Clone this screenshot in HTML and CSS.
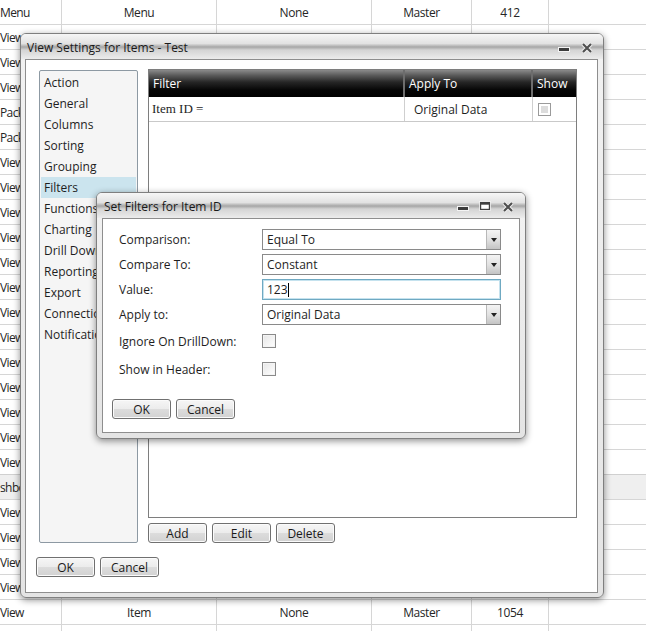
FILE: index.html
```html
<!DOCTYPE html>
<html>
<head>
<meta charset="utf-8">
<link rel="stylesheet" href="styles.css">
</head>
<body>
<div class="sheet">
  <div class="srow"><div class="c c1">Menu</div><div class="c c2">Menu</div><div class="c c3">None</div><div class="c c4">Master</div><div class="c c5">412</div><div class="c c6"></div></div>
  <div class="srow"><div class="c c1">View</div><div class="c c2"></div><div class="c c3"></div><div class="c c4"></div><div class="c c5"></div><div class="c c6"></div></div>
  <div class="srow"><div class="c c1">View</div><div class="c c2"></div><div class="c c3"></div><div class="c c4"></div><div class="c c5"></div><div class="c c6"></div></div>
  <div class="srow"><div class="c c1">View</div><div class="c c2"></div><div class="c c3"></div><div class="c c4"></div><div class="c c5"></div><div class="c c6"></div></div>
  <div class="srow"><div class="c c1">Pack</div><div class="c c2"></div><div class="c c3"></div><div class="c c4"></div><div class="c c5"></div><div class="c c6"></div></div>
  <div class="srow"><div class="c c1">Pack</div><div class="c c2"></div><div class="c c3"></div><div class="c c4"></div><div class="c c5"></div><div class="c c6"></div></div>
  <div class="srow"><div class="c c1">View</div><div class="c c2"></div><div class="c c3"></div><div class="c c4"></div><div class="c c5"></div><div class="c c6"></div></div>
  <div class="srow"><div class="c c1">View</div><div class="c c2"></div><div class="c c3"></div><div class="c c4"></div><div class="c c5"></div><div class="c c6"></div></div>
  <div class="srow"><div class="c c1">View</div><div class="c c2"></div><div class="c c3"></div><div class="c c4"></div><div class="c c5"></div><div class="c c6"></div></div>
  <div class="srow"><div class="c c1">View</div><div class="c c2"></div><div class="c c3"></div><div class="c c4"></div><div class="c c5"></div><div class="c c6"></div></div>
  <div class="srow"><div class="c c1">View</div><div class="c c2"></div><div class="c c3"></div><div class="c c4"></div><div class="c c5"></div><div class="c c6"></div></div>
  <div class="srow"><div class="c c1">View</div><div class="c c2"></div><div class="c c3"></div><div class="c c4"></div><div class="c c5"></div><div class="c c6"></div></div>
  <div class="srow"><div class="c c1">View</div><div class="c c2"></div><div class="c c3"></div><div class="c c4"></div><div class="c c5"></div><div class="c c6"></div></div>
  <div class="srow"><div class="c c1">View</div><div class="c c2"></div><div class="c c3"></div><div class="c c4"></div><div class="c c5"></div><div class="c c6"></div></div>
  <div class="srow"><div class="c c1">View</div><div class="c c2"></div><div class="c c3"></div><div class="c c4"></div><div class="c c5"></div><div class="c c6"></div></div>
  <div class="srow"><div class="c c1">View</div><div class="c c2"></div><div class="c c3"></div><div class="c c4"></div><div class="c c5"></div><div class="c c6"></div></div>
  <div class="srow"><div class="c c1">View</div><div class="c c2"></div><div class="c c3"></div><div class="c c4"></div><div class="c c5"></div><div class="c c6"></div></div>
  <div class="srow"><div class="c c1">View</div><div class="c c2"></div><div class="c c3"></div><div class="c c4"></div><div class="c c5"></div><div class="c c6"></div></div>
  <div class="srow"><div class="c c1">View</div><div class="c c2"></div><div class="c c3"></div><div class="c c4"></div><div class="c c5"></div><div class="c c6"></div></div>
  <div class="srow sel"><div class="c c1">shboard</div><div class="c c2"></div><div class="c c3"></div><div class="c c4"></div><div class="c c5"></div><div class="c c6"></div></div>
  <div class="srow"><div class="c c1">View</div><div class="c c2"></div><div class="c c3"></div><div class="c c4"></div><div class="c c5"></div><div class="c c6"></div></div>
  <div class="srow"><div class="c c1">View</div><div class="c c2"></div><div class="c c3"></div><div class="c c4"></div><div class="c c5"></div><div class="c c6"></div></div>
  <div class="srow"><div class="c c1">View</div><div class="c c2"></div><div class="c c3"></div><div class="c c4"></div><div class="c c5"></div><div class="c c6"></div></div>
  <div class="srow"><div class="c c1">View</div><div class="c c2"></div><div class="c c3"></div><div class="c c4"></div><div class="c c5"></div><div class="c c6"></div></div>
  <div class="srow"><div class="c c1">View</div><div class="c c2">Item</div><div class="c c3">None</div><div class="c c4">Master</div><div class="c c5">1054</div><div class="c c6"></div></div>
  <div class="srow"><div class="c c1"></div><div class="c c2"></div><div class="c c3"></div><div class="c c4"></div><div class="c c5"></div><div class="c c6"></div></div>
</div>

<div class="win win-main">
  <div class="titlebar">
    <span class="title">View Settings for Items - Test</span>
    <span class="ctrls">
      <svg class="ic-min" width="12" height="5" viewBox="0 0 12 5"><rect x="0.5" y="0.5" width="11" height="4" fill="#3c3c3c" stroke="#f4f4f4" stroke-width="1"/></svg>
      <svg class="ic-x" width="12" height="12" viewBox="0 0 12 12"><path d="M2 2 L10 10 M10 2 L2 10" stroke="#f4f4f4" stroke-width="4"/><path d="M2 2 L10 10 M10 2 L2 10" stroke="#505050" stroke-width="2.2"/></svg>
    </span>
  </div>
  <div class="client main-client">
    <div class="main-top">
      <div class="nav">
        <div class="nav-item">Action</div>
        <div class="nav-item">General</div>
        <div class="nav-item">Columns</div>
        <div class="nav-item">Sorting</div>
        <div class="nav-item">Grouping</div>
        <div class="nav-item active">Filters</div>
        <div class="nav-item">Functions</div>
        <div class="nav-item">Charting</div>
        <div class="nav-item">Drill Downs</div>
        <div class="nav-item">Reporting</div>
        <div class="nav-item">Export</div>
        <div class="nav-item">Connections</div>
        <div class="nav-item">Notifications</div>
      </div>
      <div class="right">
        <div class="grid">
          <div class="ghead">
            <div class="gh gc1">Filter</div>
            <div class="gh gc2">Apply To</div>
            <div class="gh gc3">Show</div>
          </div>
          <div class="grow">
            <div class="gd gc1 serif">Item ID =</div>
            <div class="gd gc2">Original Data</div>
            <div class="gd gc3"><span class="gchk"></span></div>
          </div>
        </div>
        <div class="btnrow">
          <div class="btn">Add</div>
          <div class="btn">Edit</div>
          <div class="btn">Delete</div>
        </div>
      </div>
    </div>
    <div class="btnrow bottom-btns">
      <div class="btn">OK</div>
      <div class="btn">Cancel</div>
    </div>
  </div>
</div>

<div class="win win-sub">
  <div class="titlebar">
    <span class="title">Set Filters for Item ID</span>
    <span class="ctrls sub-ctrls">
      <svg class="ic-min" width="12" height="5" viewBox="0 0 12 5"><rect x="0.5" y="0.5" width="11" height="4" fill="#3c3c3c" stroke="#f4f4f4" stroke-width="1"/></svg>
      <svg class="ic-max" width="12" height="10" viewBox="0 0 12 10"><rect x="1.5" y="1.5" width="9" height="7" fill="#fff" stroke="#404040" stroke-width="1.4"/><rect x="1.5" y="1.5" width="9" height="2.2" fill="#404040"/><rect x="0.5" y="0.5" width="11" height="9" fill="none" stroke="#f4f4f4" stroke-width="0.8"/></svg>
      <svg class="ic-x" width="12" height="12" viewBox="0 0 12 12"><path d="M2 2 L10 10 M10 2 L2 10" stroke="#f4f4f4" stroke-width="4"/><path d="M2 2 L10 10 M10 2 L2 10" stroke="#505050" stroke-width="2.2"/></svg>
    </span>
  </div>
  <div class="client sub-client">
    <div class="form">
      <div class="lbl">Comparison:</div>
      <div class="combo"><span class="ctext">Equal To</span><span class="cbtn"><svg width="6" height="4" viewBox="0 0 6 4"><path d="M0 0 H6 L3 4 Z" fill="#222"/></svg></span></div>
      <div class="lbl">Compare To:</div>
      <div class="combo"><span class="ctext">Constant</span><span class="cbtn"><svg width="6" height="4" viewBox="0 0 6 4"><path d="M0 0 H6 L3 4 Z" fill="#222"/></svg></span></div>
      <div class="lbl">Value:</div>
      <div class="tbox"><span class="ttext">123</span><span class="caret"></span></div>
      <div class="lbl">Apply to:</div>
      <div class="combo"><span class="ctext">Original Data</span><span class="cbtn"><svg width="6" height="4" viewBox="0 0 6 4"><path d="M0 0 H6 L3 4 Z" fill="#222"/></svg></span></div>
      <div class="lbl">Ignore On DrillDown:</div>
      <div class="chkcell"><span class="chk"></span></div>
      <div class="lbl">Show in Header:</div>
      <div class="chkcell"><span class="chk"></span></div>
    </div>
    <div class="btnrow sub-btns">
      <div class="btn">OK</div>
      <div class="btn">Cancel</div>
    </div>
  </div>
</div>
</body>
</html>
```

FILE: styles.css
```css
* { box-sizing: border-box; }
html, body { margin: 0; padding: 0; }
body {
  width: 646px;
  height: 631px;
  overflow: hidden;
  position: relative;
  background: #fff;
  font-family: "Open Sans", "Noto Sans", sans-serif;
  font-size: 12px;
  color: #1e1e1e;
}

/* background sheet */
.sheet { display: flex; flex-direction: column; }
.srow {
  display: flex;
  height: 25px;
  border-bottom: 1px solid #d6d6d6;
}
.srow.sel {
  background: #efefef;
  border-top: 1px solid #d0d0d0;
  margin-top: -1px;
  height: 26px;
}
.c {
  display: flex;
  align-items: center;
  justify-content: center;
  border-right: 1px solid #d6d6d6;
  white-space: nowrap;
  overflow: hidden;
  letter-spacing: -0.4px;
  color: #262626;
}
.c1 { width: 62px; justify-content: flex-start; padding-left: 0; letter-spacing: -0.6px; }
.c2 { width: 155px; }
.c3 { width: 155px; }
.c4 { width: 100px; }
.c5 { width: 77px; }
.c6 { flex: 1; border-right: none; }

/* windows */
.win {
  position: absolute;
  border: 1px solid #7f7f7f;
  border-radius: 6px;
  background: linear-gradient(#f2f2f2, #e4e4e4);
  box-shadow: 0 2px 7px rgba(0,0,0,0.45);
  display: flex;
  flex-direction: column;
  padding: 0 5px 4px 4px;
}
.win-main { left: 20px; top: 33px; width: 584px; height: 565px; }
.win-sub { left: 96px; top: 192px; width: 430px; height: 247px; padding: 0 5px 5px 5px; }

.titlebar {
  height: 25px;
  flex: none;
  display: flex;
  align-items: center;
  margin: 0 -5px 0 -4px;
  padding: 2px 10px 0 6px;
  border-radius: 5px 5px 0 0;
  background: linear-gradient(to bottom, #f6f6f6 0%, #e2e2e2 38%, #a6a6a6 52%, #d4d4d4 64%, #ececec 100%);
}
.win-sub .titlebar { margin: 0 -5px; padding-left: 7px; padding-right: 11px; }
.title { flex: 1; color: #1a1a1a; white-space: nowrap; }
.ctrls { display: flex; align-items: center; gap: 11px; }
.ctrls .ic-min { margin-top: 4px; }
.sub-ctrls { gap: 10px; }
.sub-ctrls .ic-max { margin-top: -1px; }
.sub-ctrls .ic-x { margin-left: 1px; }

.client {
  flex: 1;
  background: #fff;
  border: 1px solid #8e8e8e;
}
.main-client { padding: 10px 20px 0 10px; display: flex; flex-direction: column; }
.main-top { display: flex; }

.nav {
  width: 99px;
  height: 473px;
  margin-left: 3px;
  background: #f5f5f5;
  border: 1px solid #8d99a3;
  border-radius: 2px;
  padding: 1px 1px;
  overflow: hidden;
}
.nav-item {
  height: 21px;
  line-height: 21px;
  padding-left: 3px;
  white-space: nowrap;
  color: #1e1e1e;
}
.nav-item.active { background: #cbe4ee; }

.right { margin-left: 10px; width: 429px; margin-top: -1px; }
.grid {
  height: 449px;
  border: 1px solid #7e7e7e;
  background: #fff;
}
.ghead {
  display: flex;
  height: 27px;
  background: linear-gradient(to bottom, #8a8a8a 0%, #5a5a5a 20%, #262626 45%, #050505 75%, #000 100%);
}
.gh {
  display: flex;
  align-items: center;
  padding-left: 4px;
  color: #fff;
  border-right: 2px solid #6d6d6d;
  white-space: nowrap;
}
.gh.gc3 { border-right: none; }
.gc1 { width: 256px; }
.gc2 { width: 128px; }
.gc3 { flex: 1; }
.grow {
  display: flex;
  height: 25px;
  border-bottom: 1px solid #c9c9c9;
}
.gd {
  display: flex;
  align-items: center;
  padding-left: 3px;
  border-right: 1px solid #cfcfcf;
}
.gd.gc2 { padding-left: 9px; }
.gd.gc3 { border-right: none; padding-left: 5px; }
.serif { font-family: "Liberation Serif", "DejaVu Serif", serif; font-size: 13px; }
.gchk {
  width: 13px;
  height: 13px;
  border: 1px solid #9a9a9a;
  background: #fff;
  box-shadow: inset 0 0 0 2px #fff, inset 0 0 0 9px #dcdcdc;
}

.btnrow { display: flex; gap: 5px; margin-top: 5px; }
.bottom-btns { margin-top: 14px; margin-left: 0; }
.btn {
  width: 59px;
  height: 20px;
  border: 1px solid #707070;
  border-radius: 3px;
  background: linear-gradient(to bottom, #f6f6f6 0%, #ececec 48%, #dcdcdc 52%, #d2d2d2 100%);
  box-shadow: inset 0 0 0 1px #fbfbfb;
  display: flex;
  align-items: center;
  justify-content: center;
  color: #1a1a1a;
}

/* sub dialog */
.sub-client { padding: 10px 18px 0 9px; }
.form {
  display: grid;
  grid-template-columns: 143px 239px;
  grid-template-rows: 21px 21px 21px 21px 24px 24px;
  row-gap: 4px;
  margin-left: 7px;
}
.lbl { display: flex; align-items: center; white-space: nowrap; }
.chkcell { display: flex; align-items: center; }
.chk {
  width: 14px;
  height: 14px;
  border: 1px solid #8a8a8a;
  background: linear-gradient(135deg, #e6e6e6, #ffffff);
  box-shadow: inset 0 0 0 1px #f4f4f4;
}
.combo {
  display: flex;
  border: 1px solid #8a8a8a;
  background: #fff;
}
.ctext { flex: 1; display: flex; align-items: center; padding-left: 4px; white-space: nowrap; }
.cbtn {
  width: 14px;
  display: flex;
  align-items: center;
  justify-content: center;
  border-left: 1px solid #b8b8b8;
  background: linear-gradient(to bottom, #f4f4f4 0%, #e2e2e2 50%, #c4c4c4 100%);
}
.tbox {
  display: flex;
  align-items: center;
  border: 1px solid #6fa9c2;
  box-shadow: inset 0 0 0 1px #c5e2ee;
  padding-left: 4px;
  background: #fff;
}
.caret { width: 1px; height: 14px; background: #000; }
.sub-btns { margin-top: 18px; }
```
